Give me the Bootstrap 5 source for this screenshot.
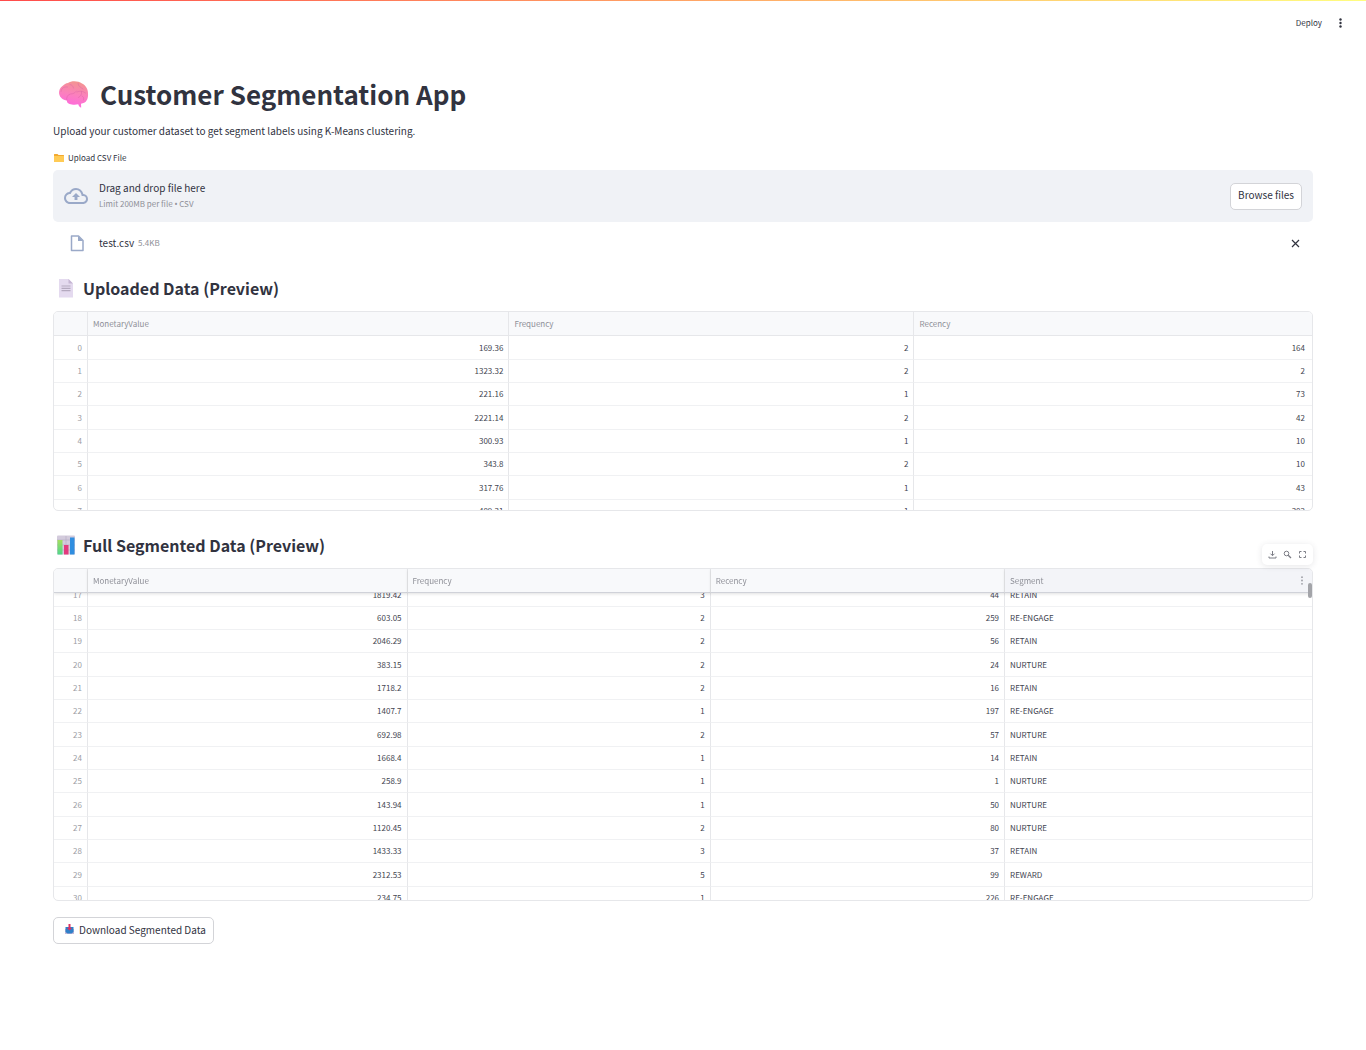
<!DOCTYPE html>
<html lang="en">
<head>
<meta charset="utf-8">
<meta name="viewport" content="width=device-width, initial-scale=1">
<title>Customer Segmentation App</title>
<link rel="stylesheet" href="https://cdn.jsdelivr.net/npm/bootstrap@5.3.0/dist/css/bootstrap.min.css">
<style>
:root{--ink:#31333f;--faded:#8f9098;--line:#e6e7ea;--icon:#9aa9c8}
body{font-family:"Noto Sans CJK SC","Noto Sans",sans-serif;font-size:10px;line-height:16px;color:var(--ink);background:#fff}
.topstripe{height:1px;background:linear-gradient(90deg,#ff4b4b,#fffd80)}
.appbar{height:44px;padding-right:20px}
.appbar button,.plain-btn{border:0;background:none;padding:0;color:inherit;line-height:16px}
.deploy-btn{margin-right:13px}
.fs-label{font-size:8px}
.app-main{padding:31px 53px 100px}
h1{font-size:26px;line-height:35px;font-weight:700;padding-left:5px;gap:11px}
h2{font-size:16px;line-height:24px;font-weight:700;padding-left:4px;gap:8px}
.intro{margin:12px 0 11px}
.upload-label{line-height:16px;padding-left:1px;gap:4px;margin-bottom:4px}
.dropzone{background:#f0f2f6;border-radius:5px;height:52px;padding:0 11px}
.drop-icon{width:35px}
.latin-dot{font-family:"Noto Sans",sans-serif}
.outline-btn{font-size:10px;line-height:16px;color:var(--ink);background:#fff;border:1px solid #d3d4d8;border-radius:5px;height:27px;padding:0 7px 2px}
.file-row{height:42px;padding:0 13px 0 11px}
.file-icon{width:35px;padding-left:6px}
.faded{color:var(--faded)}
.first-title{margin-top:12px}
.second-title{margin-top:22px}
.grid-frame{border:1px solid var(--line);border-radius:5px;overflow:hidden}
.grid-short{height:200px;margin-top:11px}
.second-grid{margin-top:11px}
.grid-tall{height:333px}
.grid-scroll{height:100%;overflow-y:auto;scrollbar-width:none}
.grid-scroll::-webkit-scrollbar{display:none}
.data-grid{width:100%;table-layout:fixed;border-collapse:separate;border-spacing:0;font-size:8px;line-height:12px;color:#42444f}
.data-grid th,.data-grid td{height:23px;padding:0 5px;border-bottom:1px solid #f0f1f3;border-right:1px solid var(--line);text-align:right;white-space:nowrap}
.data-grid tr>:last-child{border-right:0}
#uploaded td:last-child{padding-right:7px}
.data-grid tbody tr:nth-child(3n+1) > *{height:24px}
.data-grid thead th{position:sticky;top:0;z-index:1;height:24px;background:#f8f9fb;border-bottom-color:var(--line);color:var(--faded);font-weight:400;text-align:left}
.data-grid tbody th{color:#9c9da4;font-weight:400}
.data-grid .txt{text-align:left}
.grid-tall thead th{border-bottom-color:#d0d2d9;box-shadow:0 1px 3px rgba(0,0,0,.12)}
.data-grid thead th.active-col{background:#f3f4f8}
.col-idx{width:34px}
.grid-tools{position:absolute;right:0;top:-24px;z-index:3;height:21px;width:51px;padding:0 6px;background:#fff;border-radius:5px;box-shadow:0 1px 6px rgba(49,51,63,.12);color:#7b7c85}
.thumb{position:absolute;right:1px;top:15px;z-index:3;width:4px;height:15px;border-radius:2px;background:#a3a4a9}
.download{margin-top:16px;padding:0 7px 2px 10px;gap:4px}
svg{display:block;flex:none}
</style>
</head>
<body>
<div class="topstripe"></div>
<header class="appbar d-flex justify-content-end align-items-center">
  <button type="button" class="fs-label deploy-btn">Deploy</button>
  <button type="button" aria-label="Main menu"><svg width="11" height="12" viewBox="0 0 11 12" fill="#31333f"><circle cx="5.500" cy="2.500" r="1.200"/><circle cx="5.500" cy="6" r="1.200"/><circle cx="5.500" cy="9.500" r="1.200"/></svg></button>
</header>
<main class="app-main">
  <h1 class="d-flex align-items-center m-0">
    <svg width="31" height="28" viewBox="0 0 31 28"><defs><linearGradient id="brain" x1=".6" y1="0" x2=".4" y2="1"><stop offset="0" stop-color="#f3958f"/><stop offset=".5" stop-color="#fb80bd"/><stop offset="1" stop-color="#ff66e2"/></linearGradient></defs>
      <path fill="url(#brain)" d="M10 3C13 .8 20 .6 24 3.500c4 2 6 6 6 10 .4 4-1 8.500-4.500 9.500l-2.500.7.2 3.800c-1.200.2-2.400-1.500-3-3.200-3 .8-6.500.4-8.700-.3-2.200-.5-2.700-2.300-2.700-3.700C5.500 20.500 2 17.500 1.300 14.500.5 11 2 7.500 4.500 6 6 4.500 8 3.200 10 3z"/>
      <path fill="none" stroke="#dc62a6" stroke-opacity=".6" stroke-width=".8" stroke-linecap="round" stroke-linejoin="round" d="M8.800 20.300c-.6-3.300.8-5.600 3.700-6.300 3-.2 4.500-1 6-3M3 11.500C3.500 8 6 6.500 9.500 7M12 4.500c2 .3 3 1.500 3.500 3.500M20 3.500c.2 3 2.500 3.500 5 5.500M19 12c3-1.500 5.500-1 8.500 1M23.500 11.500c.5 3-.5 4.500-3 6M24 16c1.500.5 2 2 1.500 4"/></svg>
    <span>Customer Segmentation App</span>
  </h1>
  <p class="intro">Upload your customer dataset to get segment labels using K-Means clustering.</p>
  <label for="csvFile" class="upload-label fs-label d-flex align-items-center">
    <svg width="10" height="10" viewBox="0 0 10 10"><path fill="#f2a92f" d="M0 1.500q0-.5.5-.5h3l1 1h5q.5 0 .5.5V8.500q0 .5-.5.5h-9Q0 9 0 8.500z"/><path fill="#ffcb55" d="M0 3h10v5.500q0 .5-.5.5h-9Q0 9 0 8.500z"/></svg>
    <span>Upload CSV File</span>
  </label>
  <input type="file" id="csvFile" accept=".csv" class="d-none">
  <section class="dropzone d-flex align-items-center">
    <div class="drop-icon"><svg width="24" height="24" viewBox="0 0 24 24" fill="#9aa9c8"><path d="M19.350 10.040A7.490 7.490 0 0 0 12 4C9.110 4 6.600 5.640 5.350 8.040A5.994 5.994 0 0 0 0 14c0 3.310 2.690 6 6 6h13c2.760 0 5-2.240 5-5 0-2.640-2.050-4.780-4.650-4.960zM19 18H6c-2.210 0-4-1.790-4-4 0-2.050 1.530-3.760 3.560-3.970l1.070-.110.5-.950A5.469 5.469 0 0 1 12 6c2.620 0 4.880 1.860 5.390 4.430l.3 1.500 1.530.110A2.980 2.980 0 0 1 22 15c0 1.650-1.350 3-3 3z"/><path d="M8 13h2.550v3h2.900v-3H16l-4-4z"/></svg></div>
    <div class="flex-grow-1">
      <div>Drag and drop file here</div>
      <div class="fs-label faded">Limit 200MB per file <span class="latin-dot">•</span> CSV</div>
    </div>
    <button type="button" class="outline-btn" onclick="document.getElementById('csvFile').click()">Browse files</button>
  </section>
  <div class="file-row d-flex align-items-center">
    <div class="file-icon"><svg width="14" height="17" viewBox="0 0 14 17"><path fill="none" stroke="#9aa9c8" stroke-width="1.500" stroke-linejoin="round" d="M1.500 1H8.500L13 5.500V15.500H1.500z"/><path fill="#9aa9c8" d="M8 1l5 5H8z"/></svg></div>
    <div class="flex-grow-1 d-flex gap-1"><span>test.csv</span><span class="fs-label faded">5.4KB</span></div>
    <button type="button" class="plain-btn" aria-label="Remove file"><svg width="9" height="9" viewBox="0 0 9 9"><path d="M1 1l7 7M8 1L1 8" stroke="#31333f" stroke-width="1.200"/></svg></button>
  </div>

  <h2 class="first-title d-flex align-items-center mb-0">
    <svg width="18" height="20" viewBox="0 0 18 20"><path fill="#e4daef" d="M2 1h9.500L16 5.500V19.500H2z"/><path fill="#c5b6d3" d="M11.500 1v4.500H16z"/><path stroke="#b4a9bf" stroke-width="1.200" d="M4.500 8h9M4.500 10.300h9M4.500 12.600h9"/></svg>
    <span>Uploaded Data (Preview)</span>
  </h2>
  <div class="grid-frame grid-short">
    <table class="data-grid" id="uploaded">
      <colgroup><col class="col-idx"><col style="width:33.5%"><col style="width:32.2%"><col></colgroup>
      <thead><tr><th aria-label="Index"></th><th>MonetaryValue</th><th>Frequency</th><th>Recency</th></tr></thead>
      <tbody></tbody>
    </table>
  </div>

  <h2 class="second-title d-flex align-items-center mb-0">
    <svg width="18" height="20" viewBox="0 0 18 20"><defs><linearGradient id="gb" x2="0" y2="1"><stop stop-color="#a4df5f"/><stop offset="1" stop-color="#4fd68b"/></linearGradient></defs><rect width="18" height="19" y=".5" rx="1" fill="#d3cbdc"/><path stroke="#b9afc5" stroke-width=".7" d="M0 5h18M0 10h18M0 15h18M9 1v18"/><rect x=".5" y="5" width="5" height="14.500" fill="url(#gb)"/><rect x="7" y="10" width="4.500" height="9.500" fill="#e33a7d"/><rect x="13" y="2.500" width="4.500" height="17" fill="#2f8ee0"/></svg>
    <span>Full Segmented Data (Preview)</span>
  </h2>
  <div class="position-relative second-grid">
    <div class="grid-tools d-flex align-items-center justify-content-between">
      <button type="button" class="plain-btn" aria-label="Download"><svg width="9" height="9" viewBox="0 0 9 9" fill="none" stroke="currentColor"><path d="M4.500 1v4.500M2.500 3.700l2 2 2-2M1 6.500V8h7V6.500"/></svg></button>
      <button type="button" class="plain-btn" aria-label="Search"><svg width="9" height="9" viewBox="0 0 9 9" fill="none" stroke="currentColor"><circle cx="3.500" cy="3.500" r="2.300"/><path d="M5.200 5.200L8 8" stroke-width="1.300"/></svg></button>
      <button type="button" class="plain-btn" aria-label="Fullscreen"><svg width="9" height="9" viewBox="0 0 9 9" fill="none" stroke="currentColor"><path d="M1.500 3.500v-2h2M5.500 1.500h2v2M7.500 5.500v2h-2M3.500 7.500h-2v-2"/></svg></button>
    </div>
    <div class="thumb"></div>
    <div class="grid-frame grid-tall">
      <div class="grid-scroll" id="segScroll">
        <table class="data-grid" id="segmented">
          <colgroup><col class="col-idx"><col style="width:25.4%"><col style="width:24.1%"><col style="width:23.4%"><col></colgroup>
          <thead><tr><th aria-label="Index"></th><th>MonetaryValue</th><th>Frequency</th><th>Recency</th><th class="active-col"><div class="d-flex justify-content-between align-items-center"><span>Segment</span><svg width="10" height="9" viewBox="0 0 10 9" fill="#9c9da4"><circle cx="5" cy="1.200" r=".9"/><circle cx="5" cy="4.500" r=".9"/><circle cx="5" cy="7.800" r=".9"/></svg></div></th></tr></thead>
          <tbody></tbody>
        </table>
      </div>
    </div>
  </div>
  <button type="button" class="outline-btn download d-flex align-items-center">
    <svg width="11" height="11" viewBox="0 0 11 11"><path fill="#c9bad8" d="M1 5h9v5H1z"/><path fill="#2f80c9" d="M1.500 3h8v5l-2 1.500h-4L1.500 8z"/><path fill="#dd2f62" d="M4.500 0h2v4H8L5.500 6.500 3 4h1.500z"/></svg>
    <span>Download Segmented Data</span>
  </button>
</main>
<script src="https://cdn.jsdelivr.net/npm/bootstrap@5.3.0/dist/js/bootstrap.bundle.min.js"></script>
<script>
const uploaded=[[0,'169.36',2,164],[1,'1323.32',2,2],[2,'221.16',1,73],[3,'2221.14',2,42],[4,'300.93',1,10],[5,'343.8',2,10],[6,'317.76',1,43],[7,'489.31',1,302]];
const segmented=[[17,'1819.42',3,44,'RETAIN'],[18,'603.05',2,259,'RE-ENGAGE'],[19,'2046.29',2,56,'RETAIN'],[20,'383.15',2,24,'NURTURE'],[21,'1718.2',2,16,'RETAIN'],[22,'1407.7',1,197,'RE-ENGAGE'],[23,'692.98',2,57,'NURTURE'],[24,'1668.4',1,14,'RETAIN'],[25,'258.9',1,1,'NURTURE'],[26,'143.94',1,50,'NURTURE'],[27,'1120.45',2,80,'NURTURE'],[28,'1433.33',3,37,'RETAIN'],[29,'2312.53',5,99,'REWARD'],[30,'234.75',1,226,'RE-ENGAGE']];
function fill(id,rows){
  document.querySelector('#'+id+' tbody').innerHTML=rows.map(r=>'<tr>'+r.map((v,i)=>i===0?`<th scope="row">${v}</th>`:`<td${i===4?' class="txt"':''}>${v}</td>`).join('')+'</tr>').join('');
}
fill('uploaded',uploaded);
fill('segmented',segmented);
document.getElementById('segScroll').scrollTop=10;
</script>
</body>
</html>
